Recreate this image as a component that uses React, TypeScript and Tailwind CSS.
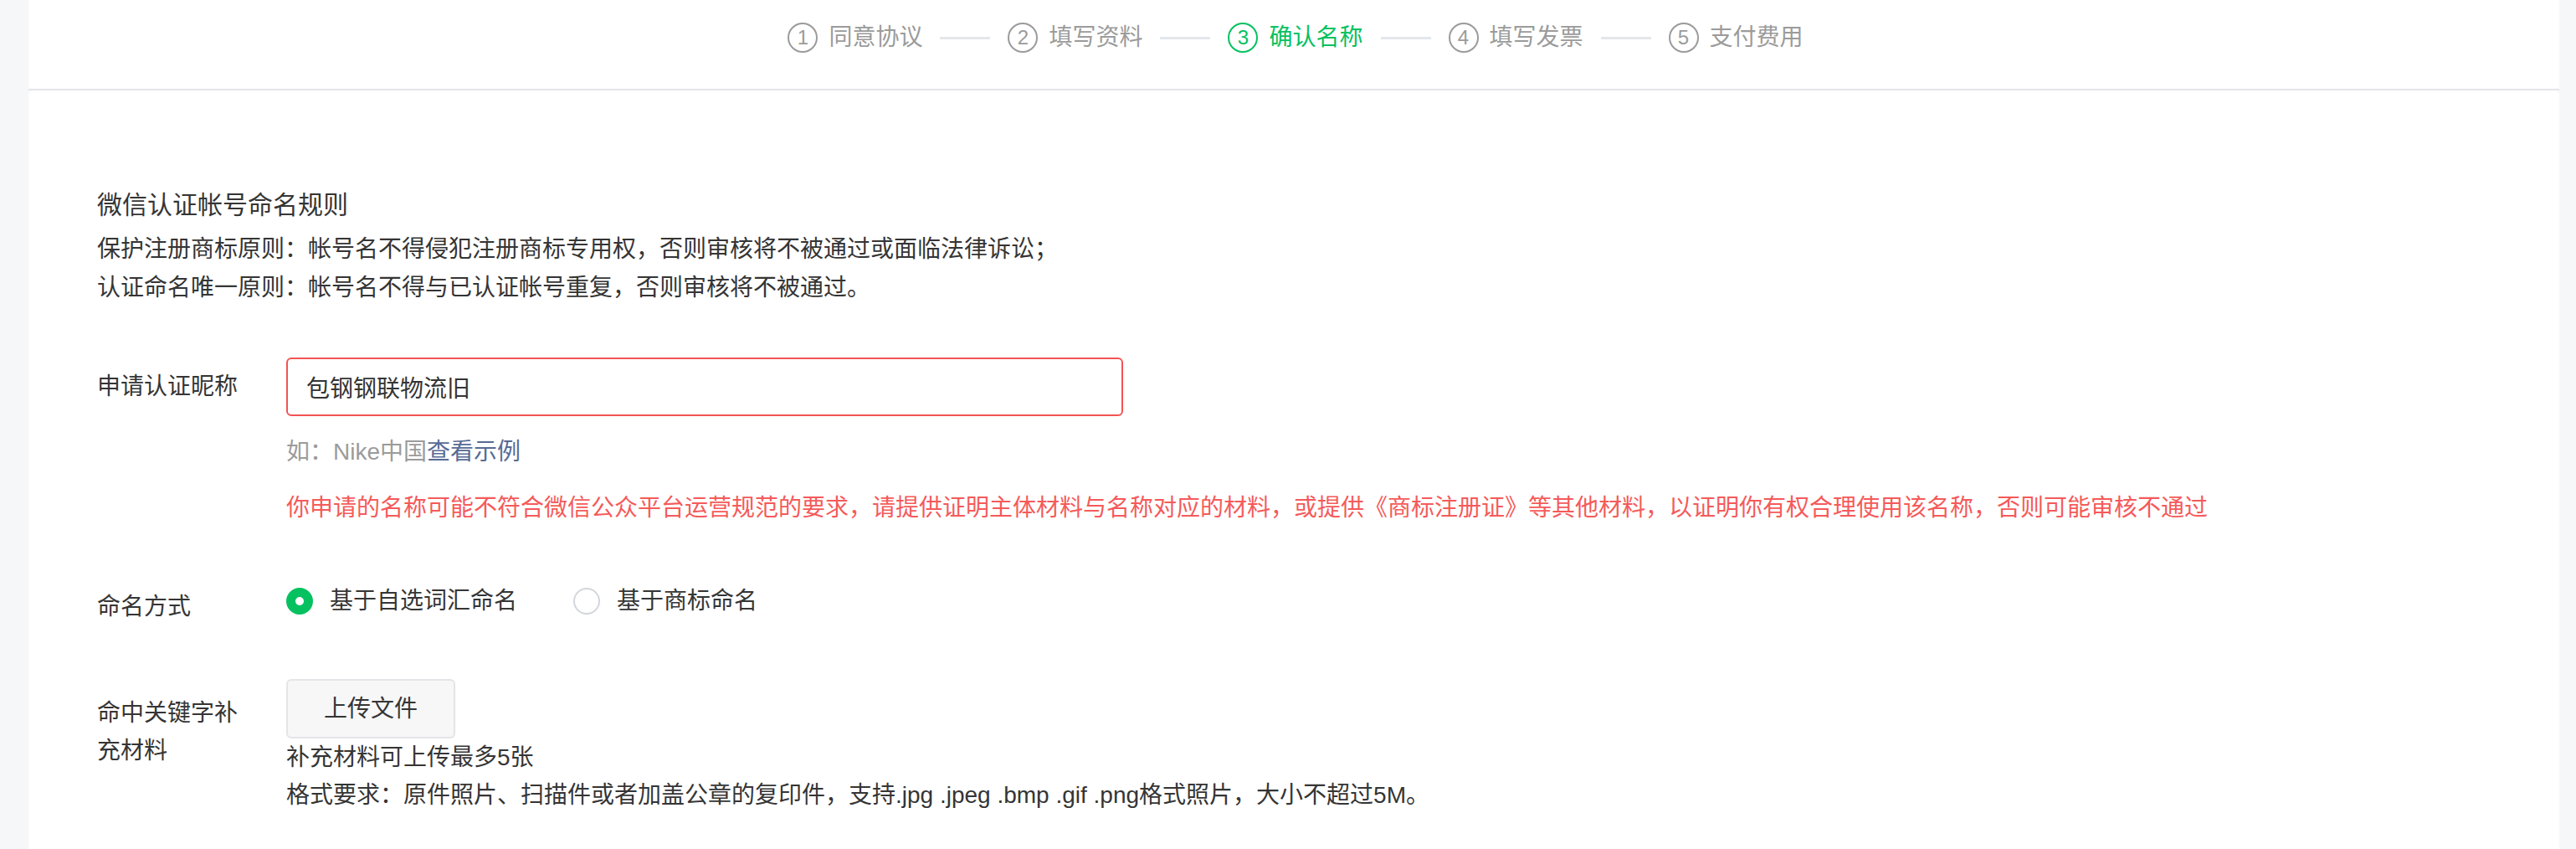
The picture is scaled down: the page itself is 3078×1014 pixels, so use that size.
import { useState } from "react";

const steps = ["同意协议", "填写资料", "确认名称", "填写发票", "支付费用"];
const current = 2;

function StepBar() {
  return (
    <div className="flex items-center h-[36px]">
      {steps.map((s, i) => (
        <div key={s} className="flex items-center">
          {i > 0 && <div className="mx-[21px] h-[3px] w-[60px] bg-[#e4e7eb]" />}
          <div
            className={
              i === current
                ? "flex items-center gap-[13px] text-[#07c160]"
                : "flex items-center gap-[13px] text-[#9b9b9b]"
            }
          >
            <span
              className={
                i === current
                  ? "flex h-[36px] w-[36px] items-center justify-center rounded-full border-2 border-[#07c160] text-[24px] font-light leading-none"
                  : "flex h-[36px] w-[36px] items-center justify-center rounded-full border-2 border-[#9b9b9b] text-[24px] font-light leading-none"
              }
            >
              {i + 1}
            </span>
            <span className="text-[28px] leading-[36px]">{s}</span>
          </div>
        </div>
      ))}
    </div>
  );
}

function Radio({ checked, label, onClick }: { checked: boolean; label: string; onClick: () => void }) {
  return (
    <button type="button" onClick={onClick} className="flex items-center gap-[20px] text-[28px] leading-[46px] text-[#353535]">
      <span
        className={
          checked
            ? "h-[32px] w-[32px] rounded-full border-[11px] border-[#07c160] bg-white"
            : "h-[32px] w-[32px] rounded-full border-2 border-[#d2d6dc] bg-white"
        }
      />
      {label}
    </button>
  );
}

export default function App() {
  const [mode, setMode] = useState(0);
  const [name, setName] = useState("包钢钢联物流旧");

  return (
    <div className="flex min-h-screen flex-col bg-[#f6f7f9] pl-[34px] pr-[20px] font-['Liberation_Sans','Noto_Sans_CJK_SC',sans-serif] text-[#353535]">
      <header className="flex h-[108px] justify-center border-b-2 border-[#e3e5e9] bg-white pt-[27px] pl-[4px]">
        <StepBar />
      </header>

      <main className="flex-1 rounded-t-[6px] bg-white px-[82px] pt-[115px] pb-[40px]">
        <h2 className="text-[30px] leading-[44px]">微信认证帐号命名规则</h2>
        <div className="mt-[8px] text-[28px] leading-[46px]">
          <p>保护注册商标原则：帐号名不得侵犯注册商标专用权，否则审核将不被通过或面临法律诉讼；</p>
          <p>认证命名唯一原则：帐号名不得与已认证帐号重复，否则审核将不被通过。</p>
        </div>

        <div className="mt-[60px] flex">
          <label className="w-[226px] shrink-0 pt-[12px] text-[28px] leading-[46px]">申请认证昵称</label>
          <div className="flex flex-col">
            <input
              value={name}
              onChange={(e) => setName(e.target.value)}
              className="h-[70px] w-[1000px] rounded-[6px] border-2 border-[#f25353] bg-white px-[22px] text-[28px] text-[#353535] outline-none"
            />
            <p className="mt-[20px] text-[28px] leading-[46px] text-[#9b9b9b]">
              如：Nike中国<a href="#" className="text-[#576b95]">查看示例</a>
            </p>
            <p className="mt-[21px] whitespace-nowrap text-[28px] leading-[46px] text-[#f55a5a]">
              你申请的名称可能不符合微信公众平台运营规范的要求，请提供证明主体材料与名称对应的材料，或提供《商标注册证》等其他材料，以证明你有权合理使用该名称，否则可能审核不通过
            </p>
          </div>
        </div>

        <div className="mt-[58px] flex">
          <label className="w-[226px] shrink-0 pt-[14px] text-[28px] leading-[46px]">命名方式</label>
          <div className="flex gap-[67px]">
            <Radio checked={mode === 0} label="基于自选词汇命名" onClick={() => setMode(0)} />
            <Radio checked={mode === 1} label="基于商标命名" onClick={() => setMode(1)} />
          </div>
        </div>

        <div className="mt-[63px] flex">
          <label className="w-[226px] shrink-0 pr-[46px] pt-[18px] text-[28px] leading-[45px]">命中关键字补充材料</label>
          <div className="flex flex-col items-start">
            <button
              type="button"
              className="h-[71px] w-[202px] rounded-[6px] border-2 border-[#e3e5e8] bg-[#f7f7f7] text-[28px] text-[#353535]"
            >
              上传文件
            </button>
            <p className="text-[28px] leading-[45px]">补充材料可上传最多5张</p>
            <p className="text-[28px] leading-[45px]">
              格式要求：原件照片、扫描件或者加盖公章的复印件，支持.jpg .jpeg .bmp .gif .png格式照片，大小不超过5M。
            </p>
          </div>
        </div>
      </main>
    </div>
  );
}
